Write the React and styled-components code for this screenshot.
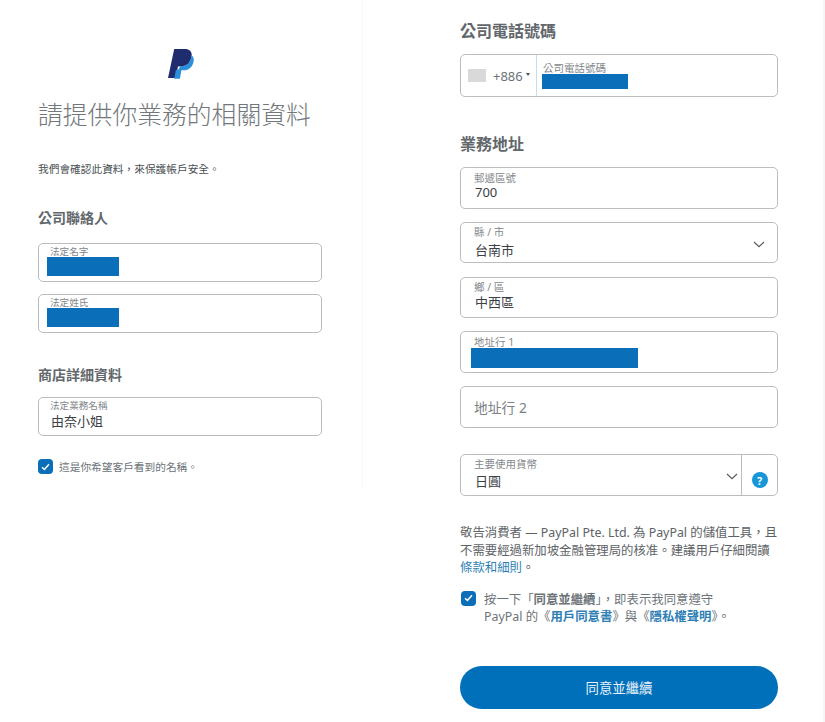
import React from "react";
import styled, { createGlobalStyle } from "styled-components";

const COMMA = "\uFF0C";

const GlobalStyle = createGlobalStyle`
  html, body {
    margin: 0;
    padding: 0;
    background: #fff;
  }
  body {
    font-family: "Noto Sans", "Noto Sans CJK TC", sans-serif;
    color: #6c7378;
  }
`;

const Page = styled.div`
  display: flex;
  align-items: flex-start;
  width: 825px;
  height: 722px;
  overflow: hidden;
  box-sizing: border-box;
  border-right: 2px solid #f6f6f6;
`;

const LeftPanel = styled.section`
  box-sizing: border-box;
  width: 363px;
  height: 487px;
  padding: 48px 40px 0 38px;
  border-right: 1px solid #f8f8f8;
`;

const RightPanel = styled.section`
  box-sizing: border-box;
  width: 318px;
  margin-left: 97px;
  padding-top: 20px;
`;

const LogoWrap = styled.div`
  display: flex;
  justify-content: center;
  height: 31px;
`;

const Title = styled.h1`
  margin: 17px 0 0;
  font-size: 24.8px;
  line-height: 36px;
  font-weight: 300;
  color: #72777b;
  white-space: nowrap;
`;

const Intro = styled.p`
  margin: 29px 0 0;
  font-size: 10.7px;
  line-height: 16px;
  color: #4a4f53;
  white-space: nowrap;
`;

const SectionTitle = styled.h2`
  margin: ${(p) => p.$top}px 0 0;
  font-size: ${(p) => p.$size}px;
  line-height: ${(p) => p.$line}px;
  font-weight: 700;
  color: #62676b;
`;

const Field = styled.div`
  position: relative;
  display: flex;
  flex-direction: column;
  box-sizing: border-box;
  height: ${(p) => p.$height}px;
  margin-top: ${(p) => p.$top}px;
  padding: ${(p) => p.$pad}px 0 0 ${(p) => p.$inset}px;
  border: 1px solid #b9bdc0;
  border-radius: 5px;
`;

const FieldLabel = styled.span`
  font-size: ${(p) => p.$size || 10.5}px;
  line-height: 12px;
  color: #83888c;
  white-space: nowrap;
`;

const FieldValue = styled.span`
  margin: ${(p) => p.$top || 0}px 0 0 1px;
  font-size: 13px;
  line-height: 16px;
  color: #3b4044;
`;

const Redacted = styled.div`
  width: ${(p) => p.$width}px;
  height: ${(p) => p.$height}px;
  margin: ${(p) => p.$top}px 0 0 ${(p) => p.$left ?? -3}px;
  background: #0a6fb8;
`;

const Placeholder = styled.span`
  margin-top: 11px;
  font-size: 13.8px;
  line-height: 20px;
  color: #7c8185;
`;

const PhoneField = styled.div`
  display: flex;
  box-sizing: border-box;
  height: 43px;
  margin-top: 12px;
  border: 1px solid #b9bdc0;
  border-radius: 5px;
`;

const CountryPicker = styled.div`
  display: flex;
  align-items: center;
  box-sizing: border-box;
  width: 76px;
  padding-left: 7px;
  border-right: 1px solid #c9dcea;
  font-size: 13px;
  color: #6c7378;
`;

const Flag = styled.span`
  width: 18px;
  height: 13px;
  margin-right: 7px;
  background: #d9d9d9;
`;

const Caret = styled.span`
  width: 0;
  height: 0;
  margin-left: 3px;
  margin-bottom: 2px;
  border-left: 2px solid transparent;
  border-right: 2px solid transparent;
  border-top: 3px solid #4a4f53;
`;

const PhoneInput = styled.div`
  display: flex;
  flex-direction: column;
  padding: 7px 0 0 6px;
`;

const Chevron = styled.svg`
  position: absolute;
  top: ${(p) => p.$top}px;
  right: ${(p) => p.$right}px;
  width: 12px;
  height: 7px;
`;

const CurrencyField = styled.div`
  display: flex;
  box-sizing: border-box;
  height: 42px;
  margin-top: 26px;
  border: 1px solid #b9bdc0;
  border-radius: 5px;
`;

const CurrencySelect = styled.div`
  position: relative;
  display: flex;
  flex-direction: column;
  flex: 1;
  padding: 3px 0 0 13px;
  border-right: 1px solid #b9bdc0;
`;

const HelpCell = styled.div`
  display: flex;
  align-items: center;
  justify-content: center;
  width: 35px;
  padding-top: 10px;
  box-sizing: border-box;
`;

const HelpBadge = styled.span`
  display: flex;
  align-items: center;
  justify-content: center;
  width: 16px;
  height: 16px;
  border-radius: 50%;
  background: #1796d8;
  color: #fff;
  font-size: 11px;
  font-weight: 700;
`;

const Notice = styled.p`
  margin: 28px 0 0;
  font-size: 12.4px;
  line-height: 17.5px;
  color: #5d6266;
`;

const TextLink = styled.a`
  color: #2f7fb5;
  font-weight: ${(p) => (p.$bold ? 700 : 400)};
`;

const CheckRow = styled.div`
  display: flex;
  align-items: flex-start;
  gap: ${(p) => p.$gap}px;
  margin-top: ${(p) => p.$top}px;
`;

const CheckBox = styled.span`
  display: flex;
  align-items: center;
  justify-content: center;
  flex: none;
  width: 15px;
  height: 15px;
  margin-left: ${(p) => p.$left || 0}px;
  border-radius: 4px;
  background: #0a6fb8;
`;

const CheckText = styled.span`
  font-size: ${(p) => p.$size}px;
  line-height: ${(p) => p.$line}px;
  color: #6c7378;
  white-space: nowrap;
`;

const SubmitButton = styled.button`
  display: block;
  width: 318px;
  height: 43px;
  margin-top: 41px;
  border: 0;
  border-radius: 22px;
  background: #0070ba;
  color: #e8f2f9;
  font-family: inherit;
  font-size: 13.4px;
  font-weight: 400;
`;

const PaypalLogo = () => (
  <svg width="27" height="31" viewBox="0 0 27 31">
    <path
      d="M7.2 1H17.6C22.6 1 25.4 3.6 24.6 8.6C23.6 14.8 19.4 18.2 13.4 18.2H11L9 30H1Z"
      fill="#1f2d6f"
    />
    <path
      d="M24.7 7.4C26.4 8.6 27.1 10.6 26.6 13.4C25.6 19 21.8 22.2 16.4 22.2H14.4L12.9 30.8H7.3L8.9 22H11L13.4 18.2C19.4 18.2 23.6 14.2 24.7 7.4Z"
      fill="#2b90d9"
    />
    <path d="M11 18.2H13.4C17.4 18.2 20.6 16.6 22.6 13.8C20.6 14.9 18.2 15.2 15.6 15.2H11.6Z" fill="#22276a" />
  </svg>
);

const CheckMark = () => (
  <svg width="9" height="8" viewBox="0 0 9 8">
    <path d="M1 4.2L3.4 6.4L8 1.2" fill="none" stroke="#fff" strokeWidth="1.5" />
  </svg>
);

const ChevronIcon = ({ top, right }) => (
  <Chevron $top={top} $right={right} viewBox="0 0 12 7">
    <path d="M1 1L6 5.6L11 1" fill="none" stroke="#555a5e" strokeWidth="1.2" />
  </Chevron>
);

export default function App() {
  return (
    <>
      <GlobalStyle />
      <Page>
        <LeftPanel>
          <LogoWrap>
            <PaypalLogo />
          </LogoWrap>
          <Title>請提供你業務的相關資料</Title>
          <Intro>我們會確認此資料{COMMA}來保護帳戶安全。</Intro>

          <SectionTitle $top={31} $size={14} $line={20}>公司聯絡人</SectionTitle>
          <Field $height={39} $top={15} $pad={2} $inset={11}>
            <FieldLabel $size={9.6}>法定名字</FieldLabel>
            <Redacted $width={72} $height={19} $top={-1} />
          </Field>
          <Field $height={39} $top={12} $pad={2} $inset={11}>
            <FieldLabel $size={9.6}>法定姓氏</FieldLabel>
            <Redacted $width={72} $height={19} $top={-1} />
          </Field>

          <SectionTitle $top={32} $size={14} $line={20}>商店詳細資料</SectionTitle>
          <Field $height={39} $top={12} $pad={2} $inset={11}>
            <FieldLabel $size={9.6}>法定業務名稱</FieldLabel>
            <FieldValue $top={1}>由奈小姐</FieldValue>
          </Field>

          <CheckRow $gap={6} $top={23}>
            <CheckBox>
              <CheckMark />
            </CheckBox>
            <CheckText $size={10.7} $line={16}>這是你希望客戶看到的名稱。</CheckText>
          </CheckRow>
        </LeftPanel>

        <RightPanel>
          <SectionTitle $top={0} $size={16} $line={22}>公司電話號碼</SectionTitle>
          <PhoneField>
            <CountryPicker>
              <Flag />
              +886
              <Caret />
            </CountryPicker>
            <PhoneInput>
              <FieldLabel>公司電話號碼</FieldLabel>
              <Redacted $width={86} $height={15} $top={0} $left={-1} />
            </PhoneInput>
          </PhoneField>

          <SectionTitle $top={36} $size={16} $line={22}>業務地址</SectionTitle>
          <Field $height={42} $top={12} $pad={4} $inset={13}>
            <FieldLabel>郵遞區號</FieldLabel>
            <FieldValue>700</FieldValue>
          </Field>
          <Field $height={41} $top={13} $pad={3} $inset={13}>
            <FieldLabel>縣 / 市</FieldLabel>
            <FieldValue $top={4}>台南市</FieldValue>
            <ChevronIcon top={18} right={12} />
          </Field>
          <Field $height={41} $top={14} $pad={3} $inset={13}>
            <FieldLabel>鄉 / 區</FieldLabel>
            <FieldValue $top={1}>中西區</FieldValue>
          </Field>
          <Field $height={42} $top={13} $pad={4} $inset={13}>
            <FieldLabel>地址行 1</FieldLabel>
            <Redacted $width={167} $height={20} $top={0} />
          </Field>
          <Field $height={42} $top={13} $pad={0} $inset={13}>
            <Placeholder>地址行 2</Placeholder>
          </Field>

          <CurrencyField>
            <CurrencySelect>
              <FieldLabel>主要使用貨幣</FieldLabel>
              <FieldValue $top={3}>日圓</FieldValue>
              <ChevronIcon top={18} right={3} />
            </CurrencySelect>
            <HelpCell>
              <HelpBadge>?</HelpBadge>
            </HelpCell>
          </CurrencyField>

          <Notice>
            敬告消費者 — PayPal Pte. Ltd. 為 PayPal 的儲值工具{COMMA}且不需要經過新加坡金融管理局的核准。建議用戶仔細閱讀
            <br />
            <TextLink>條款和細則</TextLink>。
          </Notice>

          <CheckRow $gap={8} $top={14}>
            <CheckBox $left={1}>
              <CheckMark />
            </CheckBox>
            <CheckText $size={12.4} $line={17}>
              按一下「<b>同意並繼續</b>」{COMMA}即表示我同意遵守
              <br />
              PayPal 的《<TextLink $bold>用戶同意書</TextLink>》與《<TextLink $bold>隱私權聲明</TextLink>》。
            </CheckText>
          </CheckRow>

          <SubmitButton>同意並繼續</SubmitButton>
        </RightPanel>
      </Page>
    </>
  );
}
